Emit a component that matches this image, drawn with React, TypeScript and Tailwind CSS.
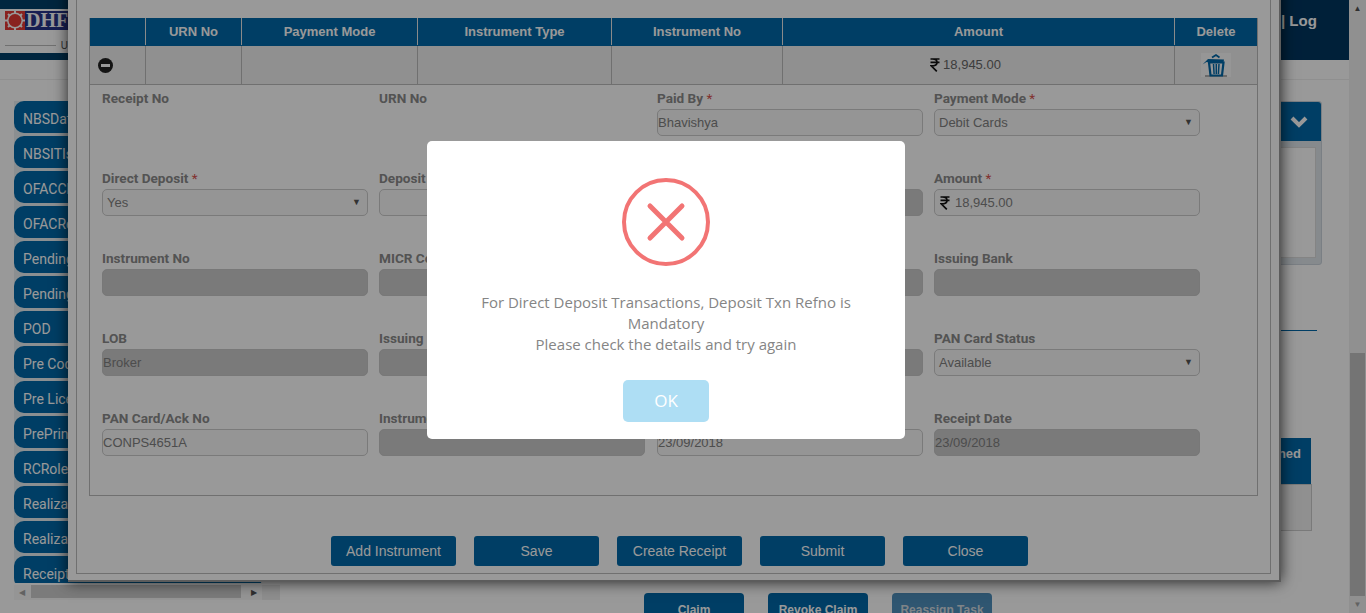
const MENU = [
  "NBSDataEntry",
  "NBSITIssuance",
  "OFACCheck",
  "OFACRelease",
  "PendingForms",
  "PendingReceipts",
  "POD",
  "Pre Coding",
  "Pre Licensing",
  "PrePrinted",
  "RCRoleMaster",
  "Realization",
  "Realization Bulk",
  "Receipting",
];

const COLUMNS = [
  { name: "", width: "w-[56px]" },
  { name: "URN No", width: "w-[96px]" },
  { name: "Payment Mode", width: "w-[176px]" },
  { name: "Instrument Type", width: "w-[194px]" },
  { name: "Instrument No", width: "w-[171px]" },
  { name: "Amount", width: "w-[392px]" },
  { name: "Delete", width: "flex-1" },
];

type Field = {
  label: string;
  required?: boolean;
  value?: string;
  kind?: "input" | "disabled" | "select" | "none";
  rupee?: boolean;
};

const FIELDS: Field[] = [
  { label: "Receipt No", kind: "none" },
  { label: "URN No", kind: "none" },
  { label: "Paid By", required: true, value: "Bhavishya" },
  { label: "Payment Mode", required: true, value: "Debit Cards", kind: "select" },
  { label: "Direct Deposit", required: true, value: "Yes", kind: "select" },
  { label: "Deposit Txn Refno" },
  { label: "Deposit Date", kind: "disabled" },
  { label: "Amount", required: true, value: "18,945.00", rupee: true },
  { label: "Instrument No", kind: "disabled" },
  { label: "MICR Code", kind: "disabled" },
  { label: "IFSC Code", kind: "disabled" },
  { label: "Issuing Bank", kind: "disabled" },
  { label: "LOB", value: "Broker", kind: "disabled" },
  { label: "Issuing Branch", kind: "disabled" },
  { label: "Account No", kind: "disabled" },
  { label: "PAN Card Status", value: "Available", kind: "select" },
  { label: "PAN Card/Ack No", value: "CONPS4651A" },
  { label: "Instrument Date", kind: "disabled" },
  { label: "Realization Date", value: "23/09/2018" },
  { label: "Receipt Date", value: "23/09/2018", kind: "disabled" },
];

const ACTIONS = ["Add Instrument", "Save", "Create Receipt", "Submit", "Close"];

const RupeeIcon = () => (
  <svg width="10" height="14" viewBox="0 0 10 14" className="shrink-0">
    <path
      d="M0.5 1h9M0.5 4.4h9M2.5 1c3.4 0 4.6 1.5 4.6 3.4S5.4 7.8 1.2 7.8L6.8 13.4"
      fill="none"
      stroke="#111"
      strokeWidth="1.7"
    />
  </svg>
);

const TrashIcon = () => (
  <div className="flex h-[24px] w-[30px] items-center justify-center bg-[#fafafa]">
    <svg width="30" height="24" viewBox="0 0 30 24">
      <path d="M4 23h22" stroke="#666" strokeWidth="1" />
      <path d="M8 9.5h14.5l-1.5 13H9.5z" fill="none" stroke="#0068a8" strokeWidth="2.2" />
      <path d="M12.5 11l.6 10M15.3 11v10M18 11l-.6 10" stroke="#0068a8" strokeWidth="1.5" />
      <path d="M1.5 11.5L7 6l16 .5-.5 3H9L5.5 9z" fill="#0068a8" />
      <path d="M11 4.6l4-2.6 3.5 2.4" fill="none" stroke="#0068a8" strokeWidth="1.8" />
    </svg>
  </div>
);

function FormField({ field }: { field: Field }) {
  const kind = field.kind ?? "input";
  return (
    <div className="h-[80px]">
      <div className="h-[16px] text-[13.6px] leading-[16px] font-bold whitespace-nowrap text-[#8a8a8a] [font-family:Roboto,sans-serif]">
        {field.label}
        {field.required && <span className="font-normal text-[#d9534f]"> *</span>}
      </div>
      {kind !== "none" && (
        <div
          className={
            kind === "disabled"
              ? "mt-[3px] flex h-[27px] w-[266px] items-center rounded-[5px] border border-[#c8c8c8] bg-[#cbcbcb] text-[13px] text-[#808080]"
              : "mt-[3px] flex h-[27px] w-[266px] items-center gap-[5px] rounded-[5px] border border-[#cccccc] bg-[#f8f8f8] text-[13px] text-[#808080]"
          }
        >
          {field.rupee && (
            <span className="ml-[5px] flex">
              <RupeeIcon />
            </span>
          )}
          <span className={kind === "select" ? "ml-[4px] flex-1" : "flex-1"}>{field.value}</span>
          {kind === "select" && <span className="mr-[6px] text-[9px] text-[#555]">▼</span>}
        </div>
      )}
    </div>
  );
}

export default function App() {
  return (
    <div className="relative h-[613px] w-[1366px] overflow-hidden bg-white [font-family:'Liberation_Sans',sans-serif]">
      {/* page behind the dialogs */}
      <div className="flex h-[613px] w-[1349px] flex-col overflow-hidden">
        <header className="flex h-[60px] shrink-0 border-t-[9px] border-b-[7px] border-[#004069] bg-white">
          <div className="w-[68px] pt-[2px] pl-[5px]">
            <div className="flex items-center">
              <svg width="20" height="19" viewBox="0 0 20 19" className="shrink-0">
                <rect width="20" height="19" fill="#e53935" />
                <circle cx="10" cy="9.5" r="8" fill="#fff" />
                <path d="M10 0v19M0 9.5h20M3 3l14 13M17 3L3 16" stroke="#fff" strokeWidth="2" />
                <circle cx="10" cy="9.5" r="6.5" fill="#e53935" />
              </svg>
              <span className="h-[19px] flex-1 bg-[#27358a] pl-[1px] text-[20px] leading-[19px] font-bold whitespace-nowrap text-white [font-family:'Liberation_Serif',serif]">
                DHF
              </span>
            </div>
            <div className="mt-[10px] flex h-[10px] items-center gap-[5px]">
              <div className="h-[1px] w-[55px] bg-[#bbb]" />
              <span className="text-[10px] text-[#555]">U</span>
            </div>
          </div>
          <div className="flex-1" />
          <div className="-mt-[9px] -mb-[7px] h-[60px] w-[68px] bg-[#003660] pt-[12px] text-[15px] leading-[17px] font-bold text-white">
            | Log
          </div>
        </header>
        <div className="h-[20px] shrink-0 border-b border-[#eee]" />
        <main className="flex min-h-0 flex-1 pt-[21px]">
          <aside className="ml-[14px] flex h-[499px] w-[266px] flex-col">
            <div className="flex h-[482px] w-[248px] shrink-0 flex-col gap-[3px] overflow-hidden bg-[#e8eef2]">
              {MENU.map((m) => (
                <div
                  key={m}
                  className="flex h-[32px] shrink-0 items-center rounded-[10px] bg-[#0068a8] pt-[4px] pl-[9px] text-[14px] text-white [font-family:Roboto,sans-serif]"
                >
                  {m}
                </div>
              ))}
            </div>
            <div className="mt-[2px] flex h-[15px] w-[266px] bg-[#f8f8f8]">
              <div className="flex w-[17px] items-center justify-center pr-[2px] text-[8px] text-[#a3a3a3]">◀</div>
              <div className="h-[13px] w-[210px] bg-[#cdcdcd]" />
              <div className="flex w-[21px] items-center justify-center pl-[5px] text-[8px] text-[#505050]">▶</div>
              <div className="w-[18px] bg-[#ececec]" />
            </div>
          </aside>
          <section className="flex flex-1 flex-col items-end">
            <div className="mr-[27px] h-[164px] w-[120px] shrink-0 rounded-[3px] border border-[#ccd4dc] bg-[#dfe6ec]">
              <div className="flex h-[39px] items-center justify-end rounded-t-[3px] bg-[#0068a8] pr-[13px]">
                <svg width="18" height="12" viewBox="0 0 18 12">
                  <path d="M2 2l7 7 7-7" fill="none" stroke="#fff" strokeWidth="4" />
                </svg>
              </div>
              <div className="mt-[6px] mr-[5px] h-[111px] border border-[#ddd] bg-white" />
            </div>
            <div className="mt-[65px] mr-[32px] h-px w-[120px] shrink-0 bg-[#0068a8]" />
            <div className="mt-[107px] mr-[38px] w-[120px] shrink-0">
              <div className="flex h-[46px] items-start justify-end bg-[#0068a8] pt-[6px] pr-[10px] text-[13px] font-bold text-white">
                Assigned
              </div>
              <div className="-mr-px h-[47px] border border-[#ccc] bg-[#f0f0f0]" />
            </div>
            <div className="mt-[62px] mr-[357px] flex shrink-0 gap-[24px]">
              <div className="h-[40px] w-[100px] rounded-[4px] bg-[#0068a8] pt-[8px] text-center text-[12px] font-bold text-white">
                Claim
              </div>
              <div className="h-[40px] w-[100px] rounded-[4px] bg-[#0068a8] pt-[8px] text-center text-[12px] font-bold text-white">
                Revoke Claim
              </div>
              <div className="h-[40px] w-[100px] rounded-[4px] bg-[#4f8fbc] pt-[8px] text-center text-[12px] font-bold text-[#d4dce2]">
                Reassign Task
              </div>
            </div>
          </section>
        </main>
      </div>

      {/* page scrollbar */}
      <div className="absolute top-0 right-0 flex h-[613px] w-[17px] flex-col items-center justify-between bg-[#f1f1f1]">
        <span className="mt-[4px] text-[8px] leading-[10px] text-[#505050]">▲</span>
        <div className="absolute top-[353px] h-[243px] w-[15px] bg-[#c1c1c1]" />
        <span className="mb-[3px] text-[8px] leading-[10px] text-[#a3a3a3]">▼</span>
      </div>

      {/* instrument window */}
      <div className="absolute top-[-20px] left-[68px] h-[602px] w-[1213px] border-r-2 border-b-2 border-[#999] bg-white px-[8px] pb-[6px] shadow-[0_0_14px_rgba(0,0,0,0.75)]">
        <div className="h-full w-[1195px] border border-[#bbb] pt-[37px] pl-[12px]">
          <div className="h-[478px] w-[1169px] border border-t-0 border-[#bbb]">
            <div className="flex h-[28px] bg-[#0068a8] pb-px text-[13px] font-bold text-white">
              {COLUMNS.map((c, i) => (
                <div
                  key={i}
                  className={`flex items-center justify-center border-r border-[#e6e6e6] last:border-r-0 ${c.width}`}
                >
                  {c.name}
                </div>
              ))}
            </div>
            <div className="flex h-[39px] border-b border-[#bbb] bg-[#f0f0f0]">
              <div className="flex w-[56px] items-center border-r border-[#bbb] pl-[8px]">
                <div className="flex h-[15px] w-[15px] items-center justify-center rounded-full bg-[#222]">
                  <div className="h-[3px] w-[9px] bg-white" />
                </div>
              </div>
              <div className="w-[96px] border-r border-[#bbb]" />
              <div className="w-[176px] border-r border-[#bbb]" />
              <div className="w-[194px] border-r border-[#bbb]" />
              <div className="w-[171px] border-r border-[#bbb]" />
              <div className="flex w-[392px] items-center justify-center gap-[3px] border-r border-[#bbb] pr-[26px] text-[13px] text-[#666]">
                <RupeeIcon />
                18,945.00
              </div>
              <div className="flex flex-1 items-center justify-center">
                <TrashIcon />
              </div>
            </div>
            <div className="grid grid-cols-[277px_278px_277px_277px] pt-[5px] pl-[12px]">
              {FIELDS.map((f) => (
                <FormField key={f.label} field={f} />
              ))}
            </div>
          </div>
          <div className="mt-[40px] ml-[242px] flex gap-[18px]">
            {ACTIONS.map((a) => (
              <div
                key={a}
                className="flex h-[30px] w-[125px] items-center justify-center rounded-[3px] bg-[#0068a8] text-[14px] text-white"
              >
                {a}
              </div>
            ))}
          </div>
        </div>
      </div>

      {/* dim layer and alert */}
      <div className="absolute inset-0 flex items-start justify-center bg-black/40">
        <div className="mt-[141px] ml-[-34px] flex h-[298px] w-[478px] flex-col items-center rounded-[5px] bg-white pt-[37px] [font-family:'Open_Sans',sans-serif]">
          <svg width="88" height="88" viewBox="0 0 88 88">
            <circle cx="44" cy="44" r="42" fill="none" stroke="#f27474" strokeWidth="4" />
            <path d="M28 28l32 32M60 28L28 60" stroke="#f27474" strokeWidth="5" strokeLinecap="round" />
          </svg>
          <p className="mt-[26px] w-[420px] text-center text-[15px] leading-[21px] text-[#858585]">
            For Direct Deposit Transactions, Deposit Txn Refno is Mandatory
            <br />
            Please check the details and try again
          </p>
          <div className="mt-[25px] flex h-[42px] w-[86px] items-center justify-center rounded-[5px] bg-[#aedef4] text-[17px] text-white">
            OK
          </div>
        </div>
      </div>
    </div>
  );
}
